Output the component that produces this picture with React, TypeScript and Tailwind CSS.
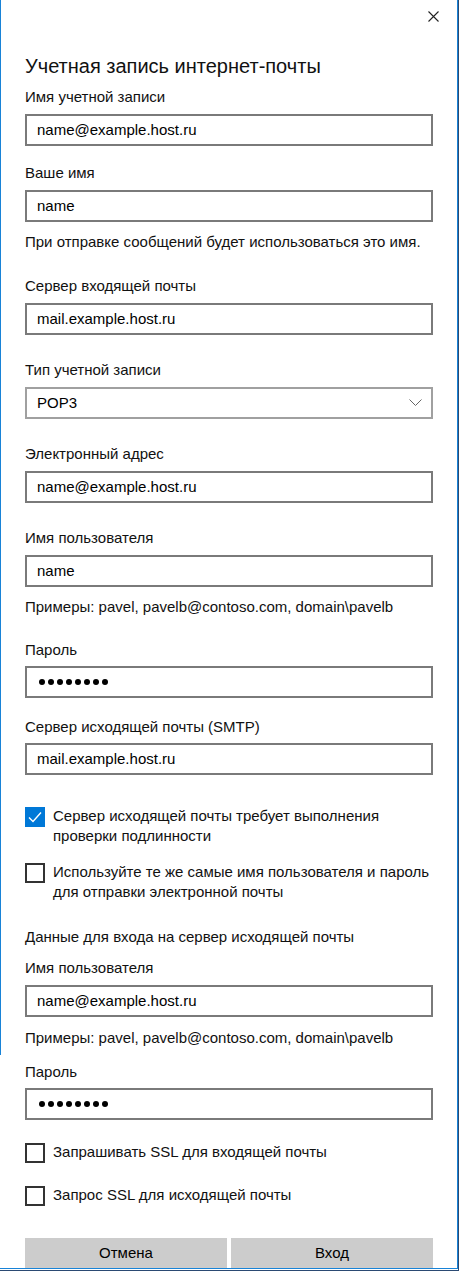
import React from "react";

const font = { fontFamily: '"Liberation Sans", Arial, sans-serif' };

function Label({ children, className = "" }: { children: React.ReactNode; className?: string }) {
  return <div className={`text-[15px] leading-[20px] text-[#111] ${className}`}>{children}</div>;
}

function Input({ value, password = false }: { value: string; password?: boolean }) {
  return (
    <div className="h-[32px] border-2 border-[#7a7a7a] flex items-center px-[10px] text-[15px] text-black">
      {password ? (
        <span className="flex gap-[3px] items-center pl-[2px]">
          {Array.from({ length: 8 }).map((_, i) => (
            <span key={i} className="block w-[6px] h-[6px] rounded-full bg-black" />
          ))}
        </span>
      ) : (
        value
      )}
    </div>
  );
}

function Check({ checked = false }: { checked?: boolean }) {
  return checked ? (
    <div className="w-[20px] h-[20px] bg-[#0078d7] flex items-center justify-center shrink-0">
      <svg width="14" height="12" viewBox="0 0 14 12">
        <path d="M1 6.5 L5 10.5 L13 1.5" fill="none" stroke="white" strokeWidth="1.4" />
      </svg>
    </div>
  ) : (
    <div className="w-[20px] h-[20px] border-2 border-[#333333] shrink-0" />
  );
}

function CheckRow({ checked = false, children, className = "" }: { checked?: boolean; children: React.ReactNode; className?: string }) {
  return (
    <div className={`flex gap-[8px] items-start ${className}`}>
      <Check checked={checked} />
      <div className="text-[15px] leading-[20px] -mt-[1px] text-[#111]">{children}</div>
    </div>
  );
}

export default function App() {
  return (
    <div style={font} className="w-[459px] h-[1271px] bg-white relative overflow-hidden">
      <div className="absolute left-0 top-0 w-[1px] h-[1055px] bg-[#1883d7]" />
      <div className="w-[459px] h-[1271px] border-r border-b border-[#2b4a73]">
        <div className="w-[458px] h-[1269px] border-r border-b border-[#1883d7] flex flex-col px-[25px] pr-[24px]">
          <div className="flex justify-end pt-[11px] -mr-[6px]">
            <svg width="11" height="11" viewBox="0 0 11 11">
              <path d="M0.5 0.5 L10.5 10.5 M10.5 0.5 L0.5 10.5" stroke="#222" strokeWidth="1.1" />
            </svg>
          </div>
          <div className="text-[20px] leading-[28px] text-[#111] mt-[30px]">Учетная запись интернет-почты</div>
          <Label className="mt-[7px] mb-[7px]">Имя учетной записи</Label>
          <Input value="name@example.host.ru" />
          <Label className="mt-[17px] mb-[7px]">Ваше имя</Label>
          <Input value="name" />
          <Label className="mt-[10px]">При отправке сообщений будет использоваться это имя.</Label>
          <Label className="mt-[24px] mb-[7px]">Сервер входящей почты</Label>
          <Input value="mail.example.host.ru" />
          <Label className="mt-[25px] mb-[7px]">Тип учетной записи</Label>
          <div className="h-[32px] border-2 border-[#a0a0a0] flex items-center justify-between px-[10px] text-[15px] text-black">
            <span>POP3</span>
            <svg width="13" height="8" viewBox="0 0 13 8" className="mr-[-1px]">
              <path d="M0.5 0.5 L6.5 6.5 L12.5 0.5" fill="none" stroke="#666" strokeWidth="1" />
            </svg>
          </div>
          <Label className="mt-[25px] mb-[7px]">Электронный адрес</Label>
          <Input value="name@example.host.ru" />
          <Label className="mt-[25px] mb-[7px]">Имя пользователя</Label>
          <Input value="name" />
          <Label className="mt-[10px]">Примеры: pavel, pavelb@contoso.com, domain\pavelb</Label>
          <Label className="mt-[23px] mb-[6px]">Пароль</Label>
          <Input value="" password />
          <Label className="mt-[19px] mb-[6px]">Сервер исходящей почты (SMTP)</Label>
          <Input value="mail.example.host.ru" />
          <CheckRow checked className="mt-[32px]">
            Сервер исходящей почты требует выполнения
            <br />
            проверки подлинности
          </CheckRow>
          <CheckRow className="mt-[17px]">
            <span className="whitespace-nowrap">Используйте те же самые имя пользователя и пароль</span>
            <br />
            для отправки электронной почты
          </CheckRow>
          <Label className="mt-[25px]">Данные для входа на сервер исходящей почты</Label>
          <Label className="mt-[11px] mb-[7px]">Имя пользователя</Label>
          <Input value="name@example.host.ru" />
          <Label className="mt-[11px]">Примеры: pavel, pavelb@contoso.com, domain\pavelb</Label>
          <Label className="mt-[14px] mb-[6px]">Пароль</Label>
          <Input value="" password />
          <CheckRow className="mt-[23px]">Запрашивать SSL для входящей почты</CheckRow>
          <CheckRow className="mt-[23px]">Запрос SSL для исходящей почты</CheckRow>
          <div className="mt-auto flex gap-[4px]">
            <div className="flex-1 h-[30px] bg-[#cccccc] flex items-center justify-center text-[15px] text-black">Отмена</div>
            <div className="flex-1 h-[30px] bg-[#cccccc] flex items-center justify-center text-[15px] text-black">Вход</div>
          </div>
        </div>
      </div>
    </div>
  );
}
